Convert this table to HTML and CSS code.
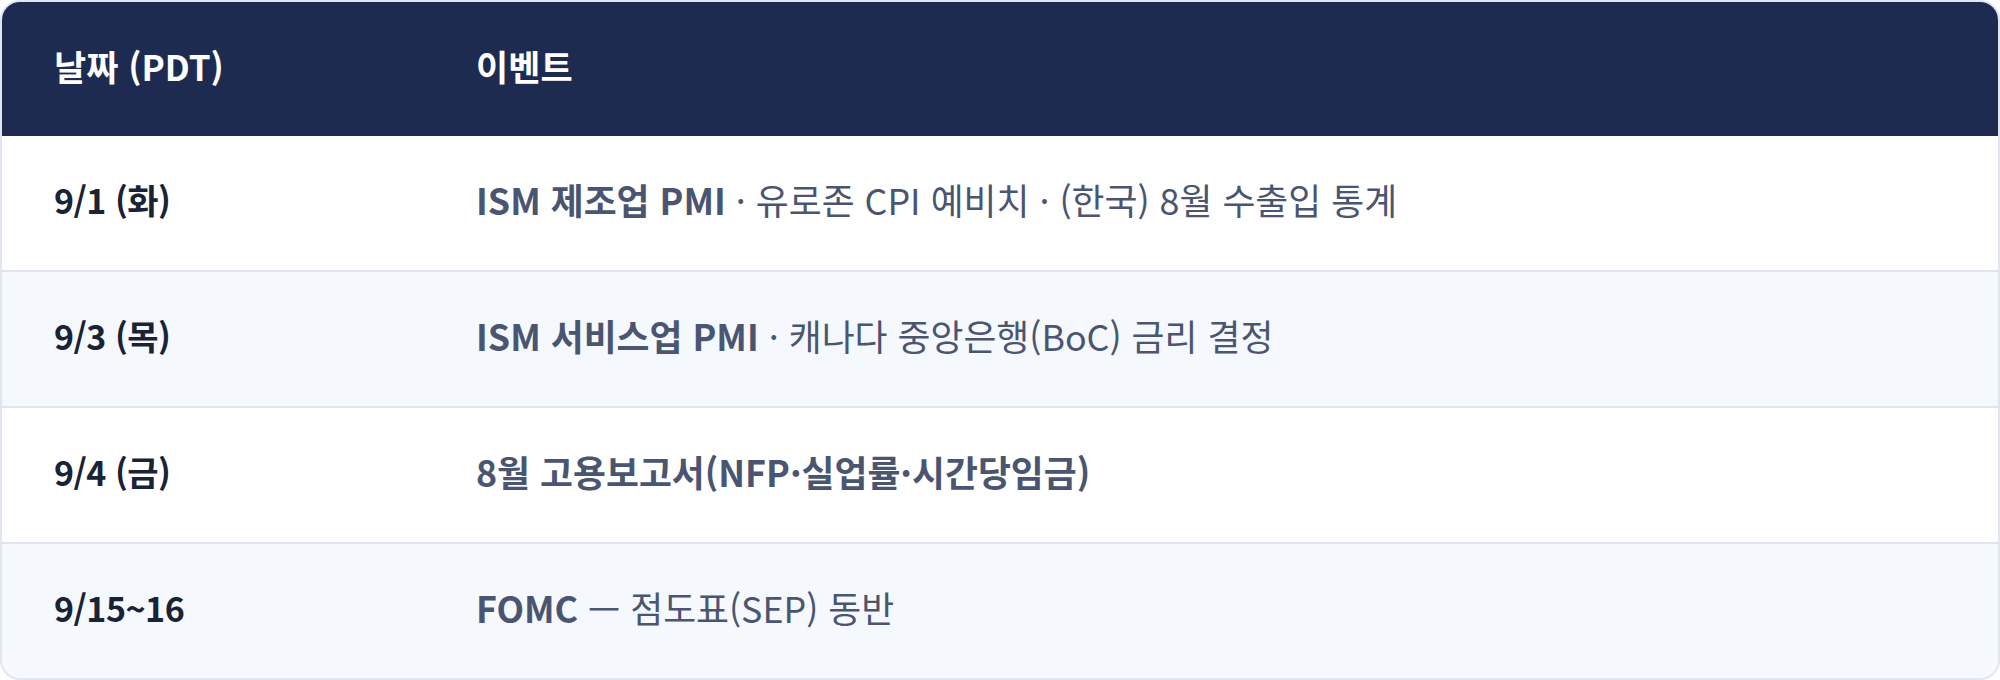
FILE: index.html
```html
<!DOCTYPE html>
<html lang="ko">
<head>
<meta charset="utf-8">
<title>일정</title>
<link rel="stylesheet" href="styles.css">
</head>
<body>
<div class="card">
  <table class="schedule">
    <colgroup><col class="col-date"><col class="col-event"></colgroup>
    <thead>
      <tr><th>날짜 (PDT)</th><th>이벤트</th></tr>
    </thead>
    <tbody>
      <tr><td class="date">9/1 (화)</td><td class="event"><b>ISM 제조업 PMI</b> · 유로존 CPI 예비치 · (한국) 8월 수출입 통계</td></tr>
      <tr><td class="date">9/3 (목)</td><td class="event"><b>ISM 서비스업 PMI</b> · 캐나다 중앙은행(BoC) 금리 결정</td></tr>
      <tr><td class="date">9/4 (금)</td><td class="event"><b>8월 고용보고서(NFP·실업률·시간당임금)</b></td></tr>
      <tr><td class="date">9/15~16</td><td class="event"><b>FOMC</b> — 점도표(SEP) 동반</td></tr>
    </tbody>
  </table>
</div>
</body>
</html>
```

FILE: styles.css
```css
html, body {
  margin: 0;
  padding: 0;
  background: #ffffff;
}
body {
  font-family: "Noto Sans CJK KR", "Noto Sans", sans-serif;
}
.card {
  width: 2000px;
  height: 680px;
  box-sizing: border-box;
  border: 2px solid #dfe6f2;
  border-radius: 20px;
  overflow: hidden;
  background: #ffffff;
}
.schedule {
  width: 100%;
  border-collapse: collapse;
  table-layout: fixed;
}
.col-date { width: 422px; }
.schedule th {
  height: 126px;
  padding: 0 0 8px 52px;
  background: #1e2b51;
  color: #ffffff;
  font-size: 35px;
  font-weight: 700;
  text-align: left;
  vertical-align: middle;
}
.schedule td {
  height: 126px;
  padding: 0 0 8px 52px;
  vertical-align: middle;
  text-align: left;
}
.schedule tbody tr {
  border-bottom: 2px solid #dfe6f2;
}
.schedule tbody tr:last-child {
  border-bottom: none;
}
.schedule tbody tr:nth-child(even) {
  background: #f5f8fd;
}
.date {
  color: #1a2236;
  font-size: 34px;
  font-weight: 700;
  letter-spacing: -0.5px;
}
.event {
  color: #4a5571;
  font-size: 35.8px;
  font-weight: 400;
}
.event b {
  font-weight: 700;
}
```
